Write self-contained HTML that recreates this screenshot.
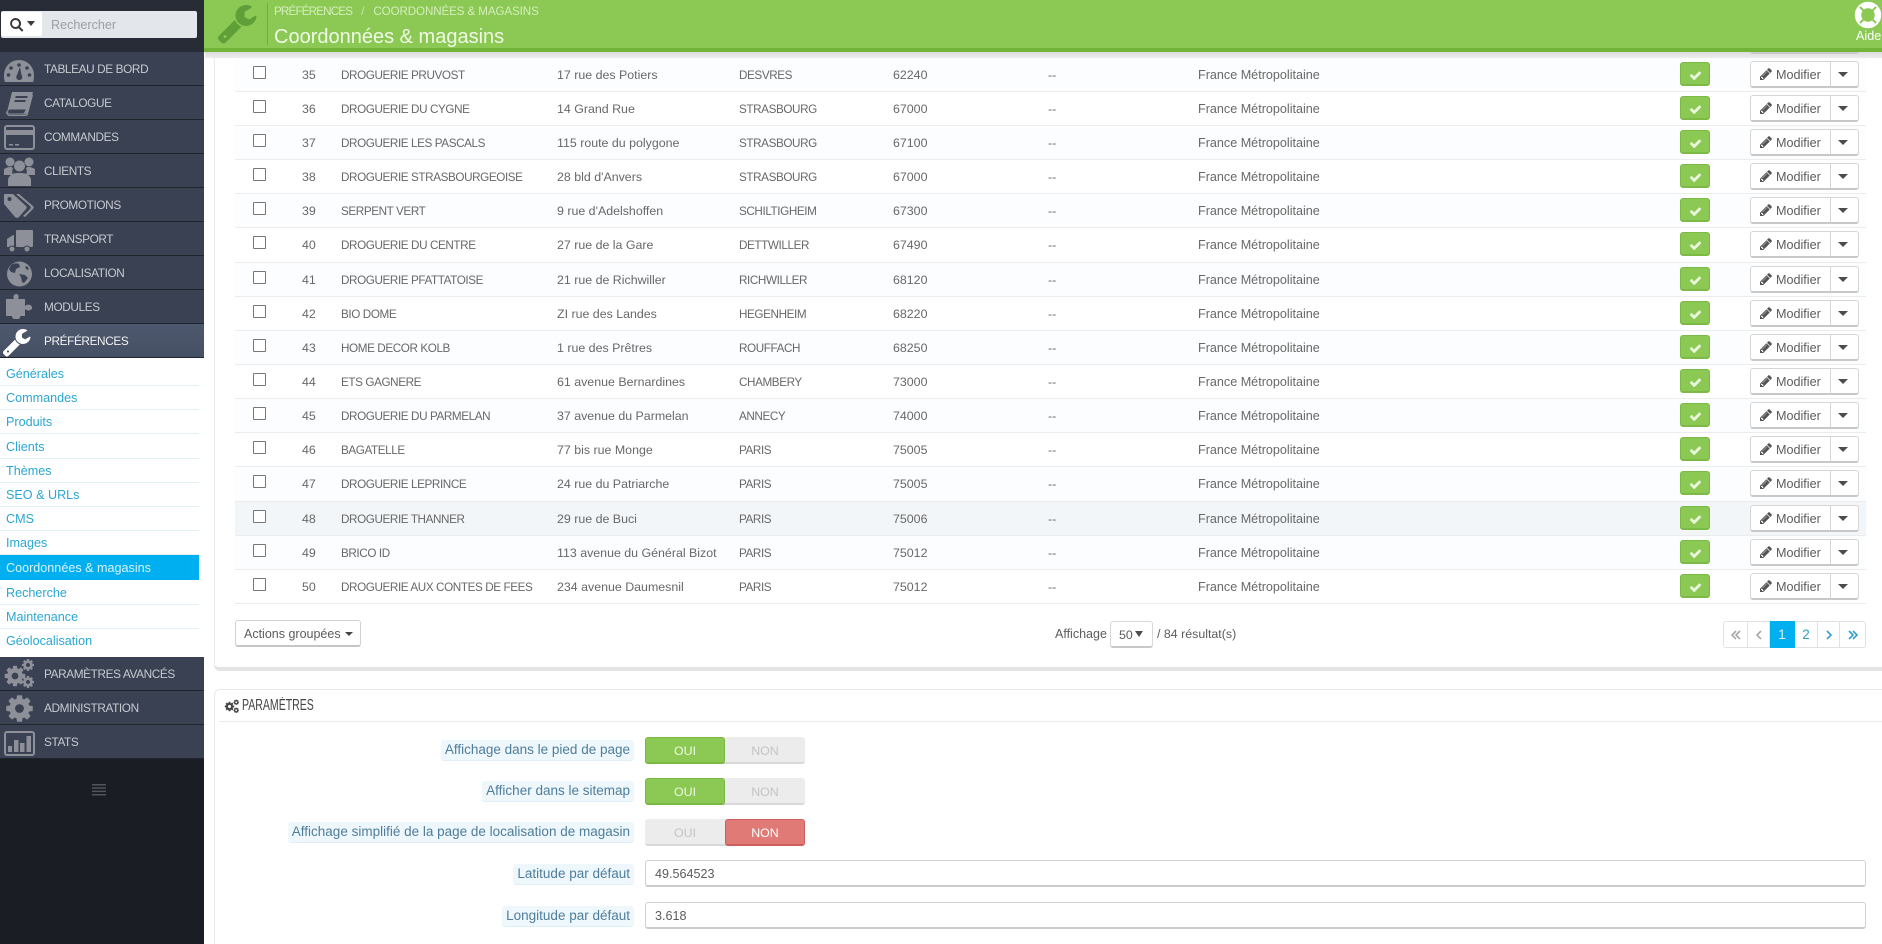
<!DOCTYPE html>
<html lang="fr"><head><meta charset="utf-8"><title>Coordonnées &amp; magasins</title>
<style>
*{box-sizing:border-box}
html,body{margin:0;padding:0;width:1882px;height:944px;overflow:hidden;background:#fff;font-family:"Liberation Sans",sans-serif;color:#666}
.a{position:absolute}
#side{left:0;top:0;width:204px;height:944px;background:#1a1d24}
.mi{position:absolute;left:0;width:204px;height:34px;background:#3a4152;border-bottom:1px solid #20242d;color:#c6cad0;font-size:11.8px;letter-spacing:-.38px;line-height:35px;padding-left:44px;white-space:nowrap}
.mi svg{position:absolute;left:0;top:0}
.mi.on{background:linear-gradient(#4d586e,#465064);color:#f2f2f2}
.sub{position:absolute;left:0;width:199px;font-size:12.6px;color:#2ba6d3;padding-left:6px;line-height:26px;height:25px;border-bottom:1px solid #e2f1f6;white-space:nowrap}
.sub.on{background:#00aff0;color:#d8f3ff;border:0;height:25px}
.row{position:absolute;left:235px;width:1631px;height:34px;border-bottom:1px solid #ececec;font-size:12.4px;line-height:35px;color:#686868;white-space:nowrap}
.row.t{background:#fbfdfe}.row.h{background:#f3f6f8}
.row span{position:absolute;top:0}
.c0{left:18px;top:8px!important;width:13px;height:13px;border:1px solid #777;background:#fff;border-radius:1px}
.c1{left:67px}
.c2{left:106px;font-size:11.7px;letter-spacing:-.4px}
.c3{left:322px}
.c4{left:504px;font-size:11.7px;letter-spacing:-.4px}
.c5{left:658px}.c6{left:813px}
.c7{left:963px;font-size:12.6px}
.ck{left:1445px;top:4px!important;width:30px;height:24px;background:#8bc954;border:1px solid #7cb945;border-bottom-width:2px;border-radius:3px}
.ck svg{position:absolute;left:8px;top:6px}
.bt{left:1515px;top:3px!important;width:109px;height:27px;background:#fff;border:1px solid #d6d6d6;border-bottom:2px solid #c8c8c8;border-radius:3px;line-height:26px;color:#5c5c5c;font-size:12.6px}
.bt svg{position:absolute;left:8px;top:5px}
.bt b{position:absolute;left:25px;top:0;font-weight:normal}
.bt i{position:absolute;left:79px;top:0;bottom:0;width:1px;background:#d6d6d6}
.bt u{position:absolute;left:87px;top:10px;width:0;height:0;border:5px solid transparent;border-top:5px solid #4d4d4d;border-bottom:0}
.lab{position:absolute;right:1248px;height:21px;line-height:20px;background:#eef7fb;border-bottom:1px solid #e0eff6;border-radius:3px;padding:0 4px;color:#4f7d9c;font-size:13.5px;white-space:nowrap}
.tg{position:absolute;left:645px;width:160px;height:27px;background:#ececec;border-radius:3px;border-bottom:2px solid #d8d8d8;font-size:12.4px;color:#c4c4c4;line-height:28px}
.tg span{position:absolute;top:0;width:80px;height:27px;text-align:center}
.tg .y{left:0;background:#8bc954;border:1px solid #79b843;border-bottom:2px solid #79b843;color:#eef9e2;border-radius:3px;line-height:26px}
.tg .n{left:80px;background:#e07a77;border:1px solid #cf5f5c;border-bottom:2px solid #cf5f5c;color:#fff;border-radius:3px;line-height:26px}
.inp{position:absolute;left:645px;width:1221px;height:27px;border:1px solid #d2d2d2;border-bottom:2px solid #ccc;border-radius:3px;background:#fff;padding-left:9px;line-height:26px;font-size:12.6px;color:#5c5c5c}
.pg{position:absolute;top:621px;height:27px;border:1px solid #e2e2e2;border-left:0;background:#fff;text-align:center;line-height:26px;font-size:13.5px;color:#2f9fd0}
.pg svg{position:absolute;left:50%;top:8px;margin-left:-6px;fill:none;stroke-width:1.6}
</style></head><body>
<svg width="0" height="0" style="position:absolute"><defs>
<symbol id="wr" viewBox="0 0 1792 1792"><path d="M363 1344q0-26-19-45t-45-19-45 19-19 45 19 45 45 19 45-19 19-45zm644-420l-682 682q-37 37-90 37-52 0-91-37l-106-108q-38-36-38-90 0-53 38-91l681-681q39 98 114.500 173.500t173.500 114.500zm634-435q0 39-23 106-47 134-164.500 217.500t-258.500 83.500q-185 0-316.500-131.500t-131.500-316.500 131.500-316.500 316.500-131.500q58 0 121.500 16.500t107.500 46.500q16 11 16 28t-16 28l-293 169v224l193 107q5-3 79-48.500t135.500-81 70.500-35.500q15 0 23.500 10t8.500 25z"/></symbol>
<symbol id="ch" viewBox="0 0 1792 1792"><path d="M1671 566q0 40-28 68l-724 724-136 136q-28 28-68 28t-68-28l-136-136-362-362q-28-28-28-68t28-68l136-136q28-28 68-28t68 28l294 295 656-657q28-28 68-28t68 28l136 136q28 28 28 68z"/></symbol>
<symbol id="pe" viewBox="0 0 1792 1792"><path d="M491 1536l91-91-235-235-91 91v107h128v128h107zm523-928q0-22-22-22-10 0-17 7l-542 542q-7 7-7 17 0 22 22 22 10 0 17-7l542-542q7-7 7-17zm-54-192l416 416-832 832h-416v-416zm683 96q0 53-37 90l-166 166-416-416 166-165q36-38 90-38 53 0 91 38l235 234q37 39 37 91z"/></symbol>
<symbol id="cg" viewBox="0 0 1792 1792"><path d="M1152 896q0-106-75-181t-181-75-181 75-75 181 75 181 181 75 181-75 75-181zm512-109v222q0 12-8 23t-20 13l-185 28q-19 54-39 91 35 50 107 138 10 12 10 25t-9 23q-27 37-99 108t-94 71q-12 0-26-9l-138-108q-44 23-91 38-16 136-29 186-7 28-36 28h-222q-14 0-24.500-8.500t-11.500-21.500l-28-184q-49-16-90-37l-141 107q-10 9-25 9-14 0-25-11-126-114-165-168-7-10-7-23 0-12 8-23 15-21 51-66.500t54-70.500q-27-50-41-99l-183-27q-13-2-21-12.500t-8-23.500v-222q0-12 8-23t19-13l186-28q14-46 39-92-40-57-107-138-10-12-10-24 0-10 9-23 26-36 98.500-107.500t94.500-71.500q13 0 26 10l138 107q44-23 91-38 16-136 29-186 7-28 36-28h222q14 0 24.500 8.500t11.500 21.500l28 184q49 16 90 37l142-107q9-9 24-9 13 0 25 10 129 119 165 170 7 8 7 22 0 12-8 23-15 21-51 66.500t-54 70.500q26 50 41 98l183 28q13 2 21 12.500t8 23.500z"/></symbol>
</defs></svg>

<div class="a" id="side">
<div class="a" style="left:0;top:0;width:204px;height:52px;background:#272c36"></div>
<div class="a" style="left:1px;top:11px;width:196px;height:27px;background:#e3e6ea;border-radius:2px"></div>
<div class="a" style="left:1px;top:12px;width:41px;height:24px;background:#fff;border-radius:2px 0 0 2px"></div>
<svg class="a" style="left:10px;top:18px" width="14" height="14" fill="#3a3a3a"><path d="M5.500 0a5.500 5.500 0 0 1 4.400 8.800l3.500 3.500-1.400 1.400-3.500-3.500A5.500 5.500 0 1 1 5.500 0zm0 2a3.500 3.500 0 1 0 0 7 3.500 3.500 0 0 0 0-7z"/></svg>
<div class="a" style="left:27px;top:21px;width:0;height:0;border:4px solid transparent;border-top:5px solid #3a3a3a;border-bottom:0"></div>
<div class="a" style="left:51px;top:16px;font-size:12.6px;line-height:18px;color:#9aa0a8">Rechercher</div>

<div class="mi" style="top:52px">TABLEAU DE BORD<svg width="40" height="34" fill="#8d9098"><path d="M5 30c-1-2-1-5-1-7a15 15 0 0 1 30 0c0 2 0 5-1 7z"/><g fill="#3a4152"><circle cx="19" cy="13" r="1.800"/><circle cx="11" cy="16" r="1.800"/><circle cx="27" cy="16" r="1.800"/><circle cx="8.500" cy="23" r="1.800"/><circle cx="29.500" cy="23" r="1.800"/><path d="M19 28a3 3 0 0 1-2-5l3-8 1.500 8a3 3 0 0 1-2.500 5z"/></g></svg></div>
<div class="mi" style="top:86px">CATALOGUE<svg width="40" height="34" fill="#8d9098"><path d="M12 6h21l-5 19a4 4 0 0 1-4 3H10a4 4 0 0 1-3-2z"/><path d="M8 26c0-1.500 1-2.500 2-2.500h16l-1 1.500c-.5 1-1 2.500-2 2.500H10c-1 0-2-.5-2-1.500z" fill="#3a4152"/><path d="M31 9l2 0-5 19c-.3 1.500-1.500 2-3 2H10c-2.500 0-4-2-4-4l1-1c0 2 1.500 3.500 3 3.500h15c1 0 1.500-.7 2-2z"/><rect x="15" y="10" width="12" height="2" fill="#3a4152" transform="skewX(-13) translate(3 0)"/><rect x="14" y="14" width="11" height="2" fill="#3a4152" transform="skewX(-13) translate(4 0)"/></svg></div>
<div class="mi" style="top:120px">COMMANDES<svg width="40" height="34"><rect x="5" y="6" width="29" height="23" rx="2" fill="none" stroke="#8d9098" stroke-width="2"/><rect x="5" y="10" width="29" height="5" fill="#8d9098"/><rect x="9" y="24" width="4" height="1.500" fill="#8d9098"/><rect x="15" y="24" width="4" height="1.500" fill="#8d9098"/></svg></div>
<div class="mi" style="top:154px">CLIENTS<svg width="40" height="34" fill="#8d9098"><circle cx="10" cy="8" r="4.500"/><circle cx="29" cy="8" r="4.500"/><circle cx="19.500" cy="12" r="5.500"/><path d="M4 15c2-1 4-2 6-2s3 1 3 1c-1 2-1 5 0 7H4zM35 15c-2-1-4-2-6-2s-3 1-3 1c1 2 1 5 0 7h9z"/><path d="M17 19h5c4 0 9 3 9 7v6H8v-6c0-4 5-7 9-7z"/></svg></div>
<div class="mi" style="top:188px">PROMOTIONS<svg width="40" height="34" fill="#8d9098"><path d="M4 6h9l13 12c1 1 1 2 0 3l-7 8c-1 1-3 1-4 0L4 16z"/><circle cx="9.500" cy="11" r="2" fill="#3a4152"/><path d="M16 6h3l14 12c1 1 1 2 0 3l-8 8-2-1 7-7c1-1 1-2 0-3z"/></svg></div>
<div class="mi" style="top:222px">TRANSPORT<svg width="40" height="34" fill="#8d9098"><rect x="16" y="8" width="17" height="17" rx="1"/><path d="M7 25v-8l6-4h1v12z"/><circle cx="12" cy="27" r="3" stroke="#3a4152"/><circle cx="27" cy="27" r="3" stroke="#3a4152"/></svg></div>
<div class="mi" style="top:256px">LOCALISATION<svg width="40" height="34"><circle cx="19.500" cy="18" r="12.500" fill="#8d9098"/><path d="M11 9c3-2 6-2 8-1l1 3-4 2-1 4-4-1-2-3zM19 18l6 1 3 3-4 5-2-1-1-5zM27 10l2 3-2 1-2-3z" fill="#3a4152"/></svg></div>
<div class="mi" style="top:290px">MODULES<svg width="40" height="34" fill="#8d9098"><path d="M6 9h8c-1-2-1-4 2-5 3 0 3 3 2 5h7v7c2-2 6-2 7 1s-4 5-7 2v7h-5c1 2-1 3-3 3h-2c-2 0-3-1-3-3H6z"/></svg></div>
<div class="mi on" style="top:324px">PRÉFÉRENCES<svg width="40" height="34" fill="#fff"><use href="#wr" x="3" y="5" width="30" height="30"/></svg></div>

<div class="a" style="left:0;top:358px;width:204px;height:299px;background:#fff"></div>
<div class="sub" style="top:361px">Générales</div>
<div class="sub" style="top:385px">Commandes</div>
<div class="sub" style="top:409px">Produits</div>
<div class="sub" style="top:434px">Clients</div>
<div class="sub" style="top:458px">Thèmes</div>
<div class="sub" style="top:482px">SEO &amp; URLs</div>
<div class="sub" style="top:506px">CMS</div>
<div class="sub" style="top:530px">Images</div>
<div class="sub on" style="top:555px">Coordonnées &amp; magasins</div>
<div class="sub" style="top:580px">Recherche</div>
<div class="sub" style="top:604px">Maintenance</div>
<div class="sub" style="top:628px;border:0">Géolocalisation</div>

<div class="mi" style="top:657px">PARAMÈTRES AVANCÉS<svg width="40" height="34" fill="#8d9098"><use href="#cg" x="3" y="7" width="24" height="24"/><use href="#cg" x="21" y="1" width="14" height="14"/><use href="#cg" x="21" y="18" width="14" height="14"/></svg></div>
<div class="mi" style="top:691px">ADMINISTRATION<svg width="40" height="34" fill="#8d9098"><use href="#cg" x="4" y="2" width="31" height="31"/></svg></div>
<div class="mi" style="top:725px">STATS<svg width="40" height="34"><rect x="5" y="7" width="29" height="23" rx="2" fill="none" stroke="#8d9098" stroke-width="2"/><rect x="8" y="21" width="4" height="6" fill="#8d9098"/><rect x="14" y="15" width="4.500" height="12" fill="#8d9098"/><rect x="20" y="18" width="4.500" height="9" fill="#8d9098"/><rect x="26.500" y="11" width="4.500" height="16" fill="#8d9098"/></svg></div>
<svg class="a" style="left:92px;top:784px" width="14" height="12" fill="#50545c"><rect y="0" width="14" height="1.500"/><rect y="3.300" width="14" height="1.500"/><rect y="6.600" width="14" height="1.500"/><rect y="10" width="14" height="1.500"/></svg>
</div>

<div class="a" style="left:214px;top:50px;width:1668px;height:621px;border-left:1px solid #e9e9e9;border-bottom:4px solid #e4e4e4;border-radius:0 0 0 6px"></div>
<div class="a" style="left:205px;top:52px;width:1677px;height:6px;background:linear-gradient(#dcdcdc,#eeeeee)"></div>
<div class="a" style="left:1750px;top:50px;width:109px;height:4px;background:#fff;border:1px solid #c8c8c8;border-top:0;border-bottom-width:2px;border-radius:0 0 3px 3px"></div>

<div class="row t" style="top:58px"><span class="c0"></span><span class="c1">35</span><span class="c2">DROGUERIE PRUVOST</span><span class="c3">17 rue des Potiers</span><span class="c4">DESVRES</span><span class="c5">62240</span><span class="c6">--</span><span class="c7">France Métropolitaine</span><span class="ck"><svg width="13" height="13" fill="#eaf7dc"><use href="#ch" width="13" height="13"/></svg></span><span class="bt"><svg width="14" height="14" fill="#555"><use href="#pe" width="14" height="14"/></svg><b>Modifier</b><i></i><u></u></span></div>
<div class="row" style="top:92px"><span class="c0"></span><span class="c1">36</span><span class="c2">DROGUERIE DU CYGNE</span><span class="c3">14 Grand Rue</span><span class="c4">STRASBOURG</span><span class="c5">67000</span><span class="c6">--</span><span class="c7">France Métropolitaine</span><span class="ck"><svg width="13" height="13" fill="#eaf7dc"><use href="#ch" width="13" height="13"/></svg></span><span class="bt"><svg width="14" height="14" fill="#555"><use href="#pe" width="14" height="14"/></svg><b>Modifier</b><i></i><u></u></span></div>
<div class="row t" style="top:126px"><span class="c0"></span><span class="c1">37</span><span class="c2">DROGUERIE LES PASCALS</span><span class="c3">115 route du polygone</span><span class="c4">STRASBOURG</span><span class="c5">67100</span><span class="c6">--</span><span class="c7">France Métropolitaine</span><span class="ck"><svg width="13" height="13" fill="#eaf7dc"><use href="#ch" width="13" height="13"/></svg></span><span class="bt"><svg width="14" height="14" fill="#555"><use href="#pe" width="14" height="14"/></svg><b>Modifier</b><i></i><u></u></span></div>
<div class="row" style="top:160px"><span class="c0"></span><span class="c1">38</span><span class="c2">DROGUERIE STRASBOURGEOISE</span><span class="c3">28 bld d'Anvers</span><span class="c4">STRASBOURG</span><span class="c5">67000</span><span class="c6">--</span><span class="c7">France Métropolitaine</span><span class="ck"><svg width="13" height="13" fill="#eaf7dc"><use href="#ch" width="13" height="13"/></svg></span><span class="bt"><svg width="14" height="14" fill="#555"><use href="#pe" width="14" height="14"/></svg><b>Modifier</b><i></i><u></u></span></div>
<div class="row t" style="top:194px"><span class="c0"></span><span class="c1">39</span><span class="c2">SERPENT VERT</span><span class="c3">9 rue d'Adelshoffen</span><span class="c4">SCHILTIGHEIM</span><span class="c5">67300</span><span class="c6">--</span><span class="c7">France Métropolitaine</span><span class="ck"><svg width="13" height="13" fill="#eaf7dc"><use href="#ch" width="13" height="13"/></svg></span><span class="bt"><svg width="14" height="14" fill="#555"><use href="#pe" width="14" height="14"/></svg><b>Modifier</b><i></i><u></u></span></div>
<div class="row" style="top:228px;height:35px"><span class="c0"></span><span class="c1">40</span><span class="c2">DROGUERIE DU CENTRE</span><span class="c3">27 rue de la Gare</span><span class="c4">DETTWILLER</span><span class="c5">67490</span><span class="c6">--</span><span class="c7">France Métropolitaine</span><span class="ck"><svg width="13" height="13" fill="#eaf7dc"><use href="#ch" width="13" height="13"/></svg></span><span class="bt"><svg width="14" height="14" fill="#555"><use href="#pe" width="14" height="14"/></svg><b>Modifier</b><i></i><u></u></span></div>
<div class="row t" style="top:263px"><span class="c0"></span><span class="c1">41</span><span class="c2">DROGUERIE PFATTATOISE</span><span class="c3">21 rue de Richwiller</span><span class="c4">RICHWILLER</span><span class="c5">68120</span><span class="c6">--</span><span class="c7">France Métropolitaine</span><span class="ck"><svg width="13" height="13" fill="#eaf7dc"><use href="#ch" width="13" height="13"/></svg></span><span class="bt"><svg width="14" height="14" fill="#555"><use href="#pe" width="14" height="14"/></svg><b>Modifier</b><i></i><u></u></span></div>
<div class="row" style="top:297px"><span class="c0"></span><span class="c1">42</span><span class="c2">BIO DOME</span><span class="c3">ZI rue des Landes</span><span class="c4">HEGENHEIM</span><span class="c5">68220</span><span class="c6">--</span><span class="c7">France Métropolitaine</span><span class="ck"><svg width="13" height="13" fill="#eaf7dc"><use href="#ch" width="13" height="13"/></svg></span><span class="bt"><svg width="14" height="14" fill="#555"><use href="#pe" width="14" height="14"/></svg><b>Modifier</b><i></i><u></u></span></div>
<div class="row t" style="top:331px"><span class="c0"></span><span class="c1">43</span><span class="c2">HOME DECOR KOLB</span><span class="c3">1 rue des Prêtres</span><span class="c4">ROUFFACH</span><span class="c5">68250</span><span class="c6">--</span><span class="c7">France Métropolitaine</span><span class="ck"><svg width="13" height="13" fill="#eaf7dc"><use href="#ch" width="13" height="13"/></svg></span><span class="bt"><svg width="14" height="14" fill="#555"><use href="#pe" width="14" height="14"/></svg><b>Modifier</b><i></i><u></u></span></div>
<div class="row" style="top:365px"><span class="c0"></span><span class="c1">44</span><span class="c2">ETS GAGNERE</span><span class="c3">61 avenue Bernardines</span><span class="c4">CHAMBERY</span><span class="c5">73000</span><span class="c6">--</span><span class="c7">France Métropolitaine</span><span class="ck"><svg width="13" height="13" fill="#eaf7dc"><use href="#ch" width="13" height="13"/></svg></span><span class="bt"><svg width="14" height="14" fill="#555"><use href="#pe" width="14" height="14"/></svg><b>Modifier</b><i></i><u></u></span></div>
<div class="row t" style="top:399px"><span class="c0"></span><span class="c1">45</span><span class="c2">DROGUERIE DU PARMELAN</span><span class="c3">37 avenue du Parmelan</span><span class="c4">ANNECY</span><span class="c5">74000</span><span class="c6">--</span><span class="c7">France Métropolitaine</span><span class="ck"><svg width="13" height="13" fill="#eaf7dc"><use href="#ch" width="13" height="13"/></svg></span><span class="bt"><svg width="14" height="14" fill="#555"><use href="#pe" width="14" height="14"/></svg><b>Modifier</b><i></i><u></u></span></div>
<div class="row" style="top:433px"><span class="c0"></span><span class="c1">46</span><span class="c2">BAGATELLE</span><span class="c3">77 bis rue Monge</span><span class="c4">PARIS</span><span class="c5">75005</span><span class="c6">--</span><span class="c7">France Métropolitaine</span><span class="ck"><svg width="13" height="13" fill="#eaf7dc"><use href="#ch" width="13" height="13"/></svg></span><span class="bt"><svg width="14" height="14" fill="#555"><use href="#pe" width="14" height="14"/></svg><b>Modifier</b><i></i><u></u></span></div>
<div class="row t" style="top:467px;height:35px"><span class="c0"></span><span class="c1">47</span><span class="c2">DROGUERIE LEPRINCE</span><span class="c3">24 rue du Patriarche</span><span class="c4">PARIS</span><span class="c5">75005</span><span class="c6">--</span><span class="c7">France Métropolitaine</span><span class="ck"><svg width="13" height="13" fill="#eaf7dc"><use href="#ch" width="13" height="13"/></svg></span><span class="bt"><svg width="14" height="14" fill="#555"><use href="#pe" width="14" height="14"/></svg><b>Modifier</b><i></i><u></u></span></div>
<div class="row h" style="top:502px"><span class="c0"></span><span class="c1">48</span><span class="c2">DROGUERIE THANNER</span><span class="c3">29 rue de Buci</span><span class="c4">PARIS</span><span class="c5">75006</span><span class="c6">--</span><span class="c7">France Métropolitaine</span><span class="ck"><svg width="13" height="13" fill="#eaf7dc"><use href="#ch" width="13" height="13"/></svg></span><span class="bt"><svg width="14" height="14" fill="#555"><use href="#pe" width="14" height="14"/></svg><b>Modifier</b><i></i><u></u></span></div>
<div class="row t" style="top:536px"><span class="c0"></span><span class="c1">49</span><span class="c2">BRICO ID</span><span class="c3">113 avenue du Général Bizot</span><span class="c4">PARIS</span><span class="c5">75012</span><span class="c6">--</span><span class="c7">France Métropolitaine</span><span class="ck"><svg width="13" height="13" fill="#eaf7dc"><use href="#ch" width="13" height="13"/></svg></span><span class="bt"><svg width="14" height="14" fill="#555"><use href="#pe" width="14" height="14"/></svg><b>Modifier</b><i></i><u></u></span></div>
<div class="row" style="top:570px"><span class="c0"></span><span class="c1">50</span><span class="c2">DROGUERIE AUX CONTES DE FEES</span><span class="c3">234 avenue Daumesnil</span><span class="c4">PARIS</span><span class="c5">75012</span><span class="c6">--</span><span class="c7">France Métropolitaine</span><span class="ck"><svg width="13" height="13" fill="#eaf7dc"><use href="#ch" width="13" height="13"/></svg></span><span class="bt"><svg width="14" height="14" fill="#555"><use href="#pe" width="14" height="14"/></svg><b>Modifier</b><i></i><u></u></span></div>

<!-- header -->
<div class="a" style="left:204px;top:0;width:1678px;height:52px;background:#8bc954;border-bottom:4px solid #74b33a"></div>
<svg class="a" style="left:218px;top:5px" width="42" height="42" fill="#5f9f38"><use href="#wr" width="42" height="42"/></svg>
<div class="a" style="left:267px;top:3px;width:1px;height:42px;background:#6fae3c"></div>
<div class="a" style="left:274px;top:3px;font-size:11.6px;line-height:17px;color:#d5edbb;white-space:nowrap"><span style="letter-spacing:-.8px">PRÉFÉRENCES</span><span style="margin:0 9px;color:#c8e6a8">/</span><span style="letter-spacing:-.1px">COORDONNÉES &amp; MAGASINS</span></div>
<div class="a" style="left:274px;top:24px;font-size:20px;line-height:26px;color:#f0f9e6;white-space:nowrap">Coordonnées &amp; magasins</div>
<svg class="a" style="left:1854px;top:1px" width="28" height="28"><circle cx="14" cy="14" r="10" fill="none" stroke="#fff" stroke-width="6.500"/><g stroke="#8bc954" stroke-width="2"><path d="M6 6l5 5M22 6l-5 5M6 22l5-5M22 22l-5-5"/></g></svg>
<div class="a" style="left:1856px;top:29px;font-size:12.6px;line-height:15px;color:#fff">Aide</div>

<!-- table footer -->
<div class="a" style="left:235px;top:620px;width:126px;height:27px;border:1px solid #d2d2d2;border-bottom:2px solid #c6c6c6;border-radius:3px;background:#fff;font-size:12.5px;line-height:26px;padding-left:8px;color:#5c5c5c;white-space:nowrap">Actions groupées<span style="display:inline-block;margin-left:4px;vertical-align:2px;border:4px solid transparent;border-top:4px solid #444;border-bottom:0"></span></div>
<div class="a" style="left:1055px;top:625px;font-size:12.5px;line-height:18px;color:#5c5c5c">Affichage</div>
<div class="a" style="left:1110px;top:621px;width:43px;height:27px;border:1px solid #d8d8d8;border-bottom:2px solid #c8c8c8;border-radius:3px;background:#fff;font-size:12.4px;line-height:26px;padding-left:8px;color:#5c5c5c">50<span style="position:absolute;left:24px;top:9px;border:4.500px solid transparent;border-top:6px solid #4d4d4d;border-bottom:0"></span></div>
<div class="a" style="left:1157px;top:625px;font-size:12.4px;line-height:18px;color:#5c5c5c">/ 84 résultat(s)</div>

<div class="pg" style="left:1723px;width:25px;border-left:1px solid #e2e2e2;border-radius:3px 0 0 3px"><svg width="12" height="10" stroke="#a8a8a8"><path d="M6 1L2 5l4 4M10 1L6 5l4 4"/></svg></div>
<div class="pg" style="left:1748px;width:22px"><svg width="12" height="10" stroke="#a8a8a8"><path d="M8 1L4 5l4 4"/></svg></div>
<div class="pg" style="left:1770px;width:25px;background:#00aff0;border-color:#00aff0;color:#d8f3ff">1</div>
<div class="pg" style="left:1795px;width:23px">2</div>
<div class="pg" style="left:1818px;width:22px"><svg width="12" height="10" stroke="#2f9fd0"><path d="M4 1l4 4-4 4"/></svg></div>
<div class="pg" style="left:1840px;width:26px;border-radius:0 3px 3px 0"><svg width="12" height="10" stroke="#2f9fd0"><path d="M2 1l4 4-4 4M6 1l4 4-4 4"/></svg></div>

<!-- panel 2 -->
<div class="a" style="left:214px;top:689px;width:1668px;height:255px;border-left:1px solid #e9e9e9;border-top:1px solid #e9e9e9;border-radius:6px 0 0 0"></div>
<div class="a" style="left:219px;top:721px;width:1663px;height:1px;background:#ececec"></div>
<svg class="a" style="left:224px;top:699px" width="16" height="15" fill="#444"><use href="#cg" x="0" y="2" width="11" height="11"/><use href="#cg" x="9" y="0" width="6.500" height="6.500"/><use href="#cg" x="9" y="8" width="6.500" height="6.500"/></svg>
<div class="a" style="left:242px;top:697px;font-size:15.5px;line-height:18px;color:#444;white-space:nowrap;transform:scaleX(.68);transform-origin:0 0">PARAMÈTRES</div>

<div class="lab" style="top:740px">Affichage dans le pied de page</div>
<div class="tg" style="top:737px"><span class="y">OUI</span><span style="left:80px">NON</span></div>
<div class="lab" style="top:781px">Afficher dans le sitemap</div>
<div class="tg" style="top:778px"><span class="y">OUI</span><span style="left:80px">NON</span></div>
<div class="lab" style="top:822px">Affichage simplifié de la page de localisation de magasin</div>
<div class="tg" style="top:819px"><span style="left:0">OUI</span><span class="n">NON</span></div>
<div class="lab" style="top:864px">Latitude par défaut</div>
<div class="inp" style="top:860px">49.564523</div>
<div class="lab" style="top:906px">Longitude par défaut</div>
<div class="inp" style="top:902px">3.618</div>
</body></html>
